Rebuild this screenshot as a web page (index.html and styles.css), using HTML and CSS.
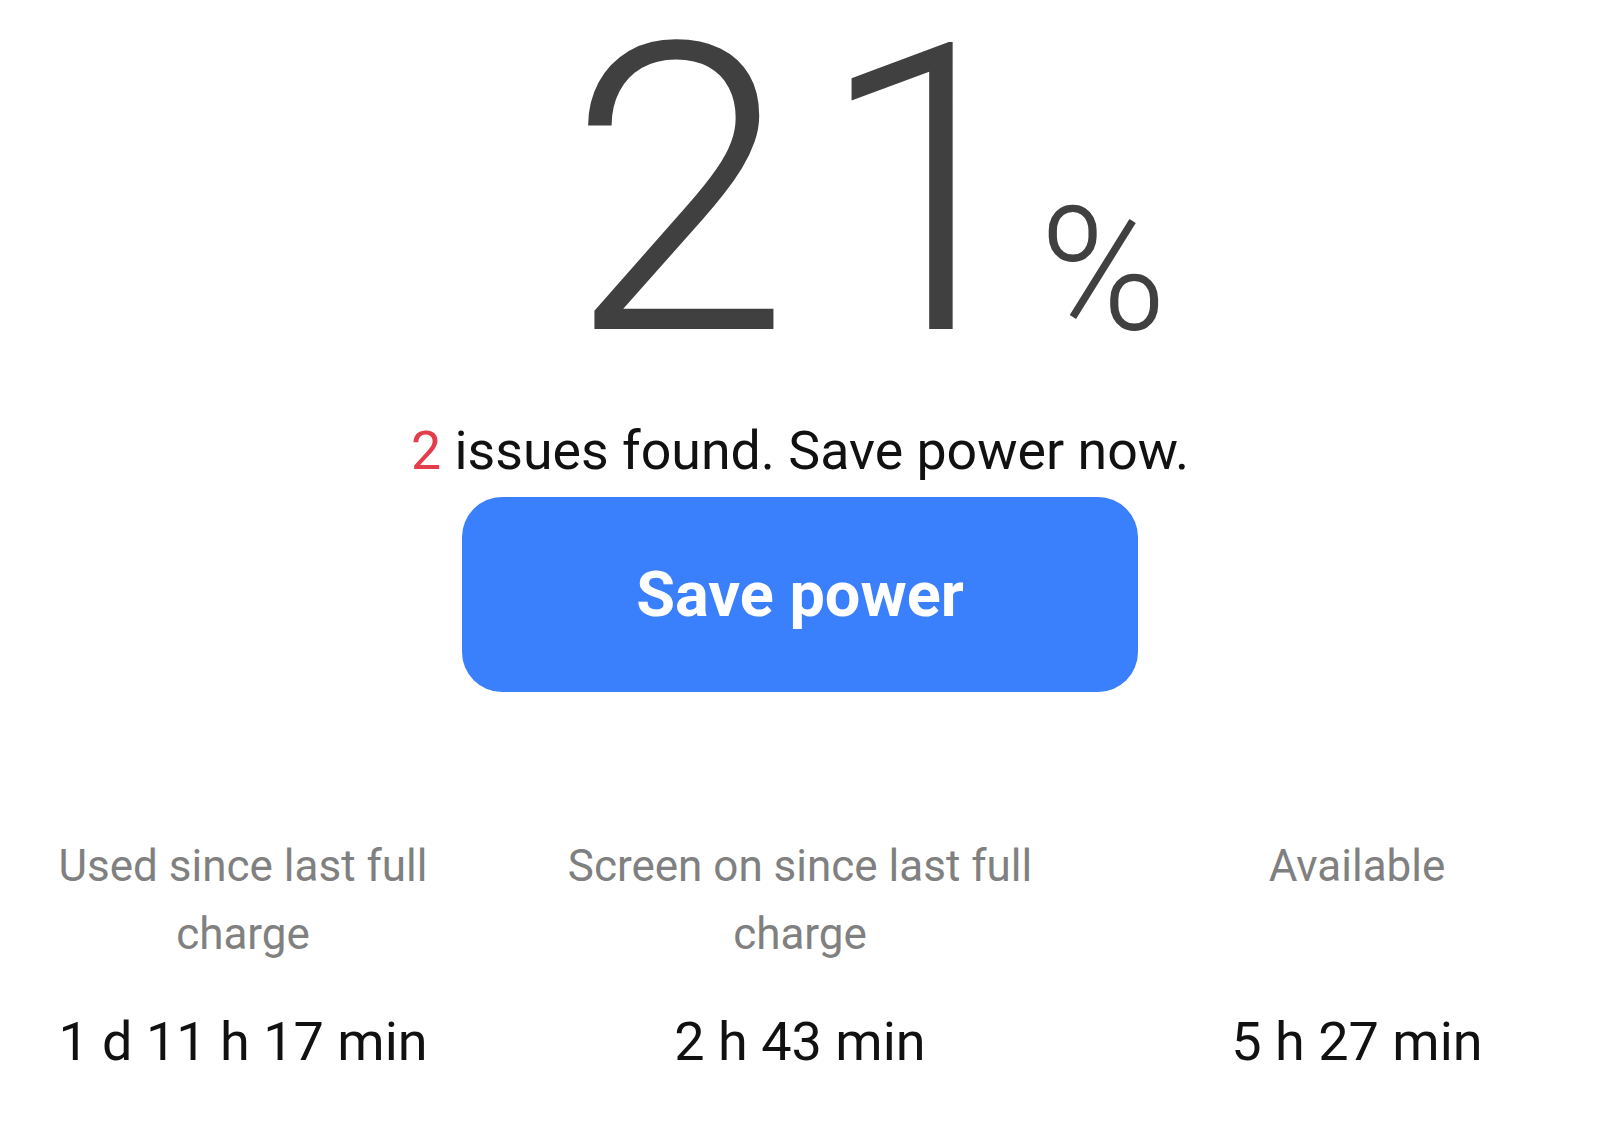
FILE: index.html
```html
<!DOCTYPE html>
<html lang="en">
<head>
<meta charset="utf-8">
<title>Battery</title>
<link rel="stylesheet" href="styles.css">
</head>
<body>
<main class="page">
  <div class="hero">
    <span class="num"><span class="tens">2</span>1</span><span class="pct">%</span>
  </div>
  <p class="issues"><span class="count">2</span> issues found. Save power now.</p>
  <button class="save">Save power</button>
  <section class="stats">
    <div class="label">Used since last full charge</div>
    <div class="label">Screen on since last full charge</div>
    <div class="label">Available</div>
    <div class="value">1 d 11 h 17 min</div>
    <div class="value">2 h 43 min</div>
    <div class="value">5 h 27 min</div>
  </section>
</main>
</body>
</html>
```

FILE: styles.css
```css
html, body {
  margin: 0;
  padding: 0;
  background: #ffffff;
}

body {
  font-family: Roboto, "Noto Sans", sans-serif;
  width: 1600px;
  height: 1123px;
  overflow: hidden;
}

.page {
  display: flex;
  flex-direction: column;
  align-items: center;
}

.hero {
  display: flex;
  justify-content: center;
  align-items: baseline;
  padding-top: 32px;
  padding-left: 134px;
  height: 320px;
  line-height: 320px;
  color: #404040;
  font-weight: 300;
}

.num {
  font-size: 402px;
}

.tens {
  margin-right: 26px;
}

.pct {
  font-size: 172px;
  line-height: 0.5;
}

.issues {
  margin: 67px 0 0;
  font-size: 53.7px;
  line-height: 64px;
  color: #111111;
  text-align: center;
}

.count {
  color: #e23e4c;
}

.save {
  margin-top: 14px;
  width: 676px;
  height: 195px;
  border: none;
  border-radius: 40px;
  background: #3a7ffb;
  color: #ffffff;
  font-family: Roboto, "Noto Sans", sans-serif;
  font-size: 63px;
  font-weight: 700;
  padding: 0;
}

.stats {
  margin-top: 140px;
  width: 1600px;
  display: grid;
  grid-template-columns: repeat(3, 1fr);
  column-gap: 71px;
  row-gap: 42px;
  text-align: center;
}

.label {
  font-size: 44px;
  line-height: 68px;
  color: #808080;
}

.value {
  font-size: 54px;
  line-height: 64px;
  color: #111111;
}
```
